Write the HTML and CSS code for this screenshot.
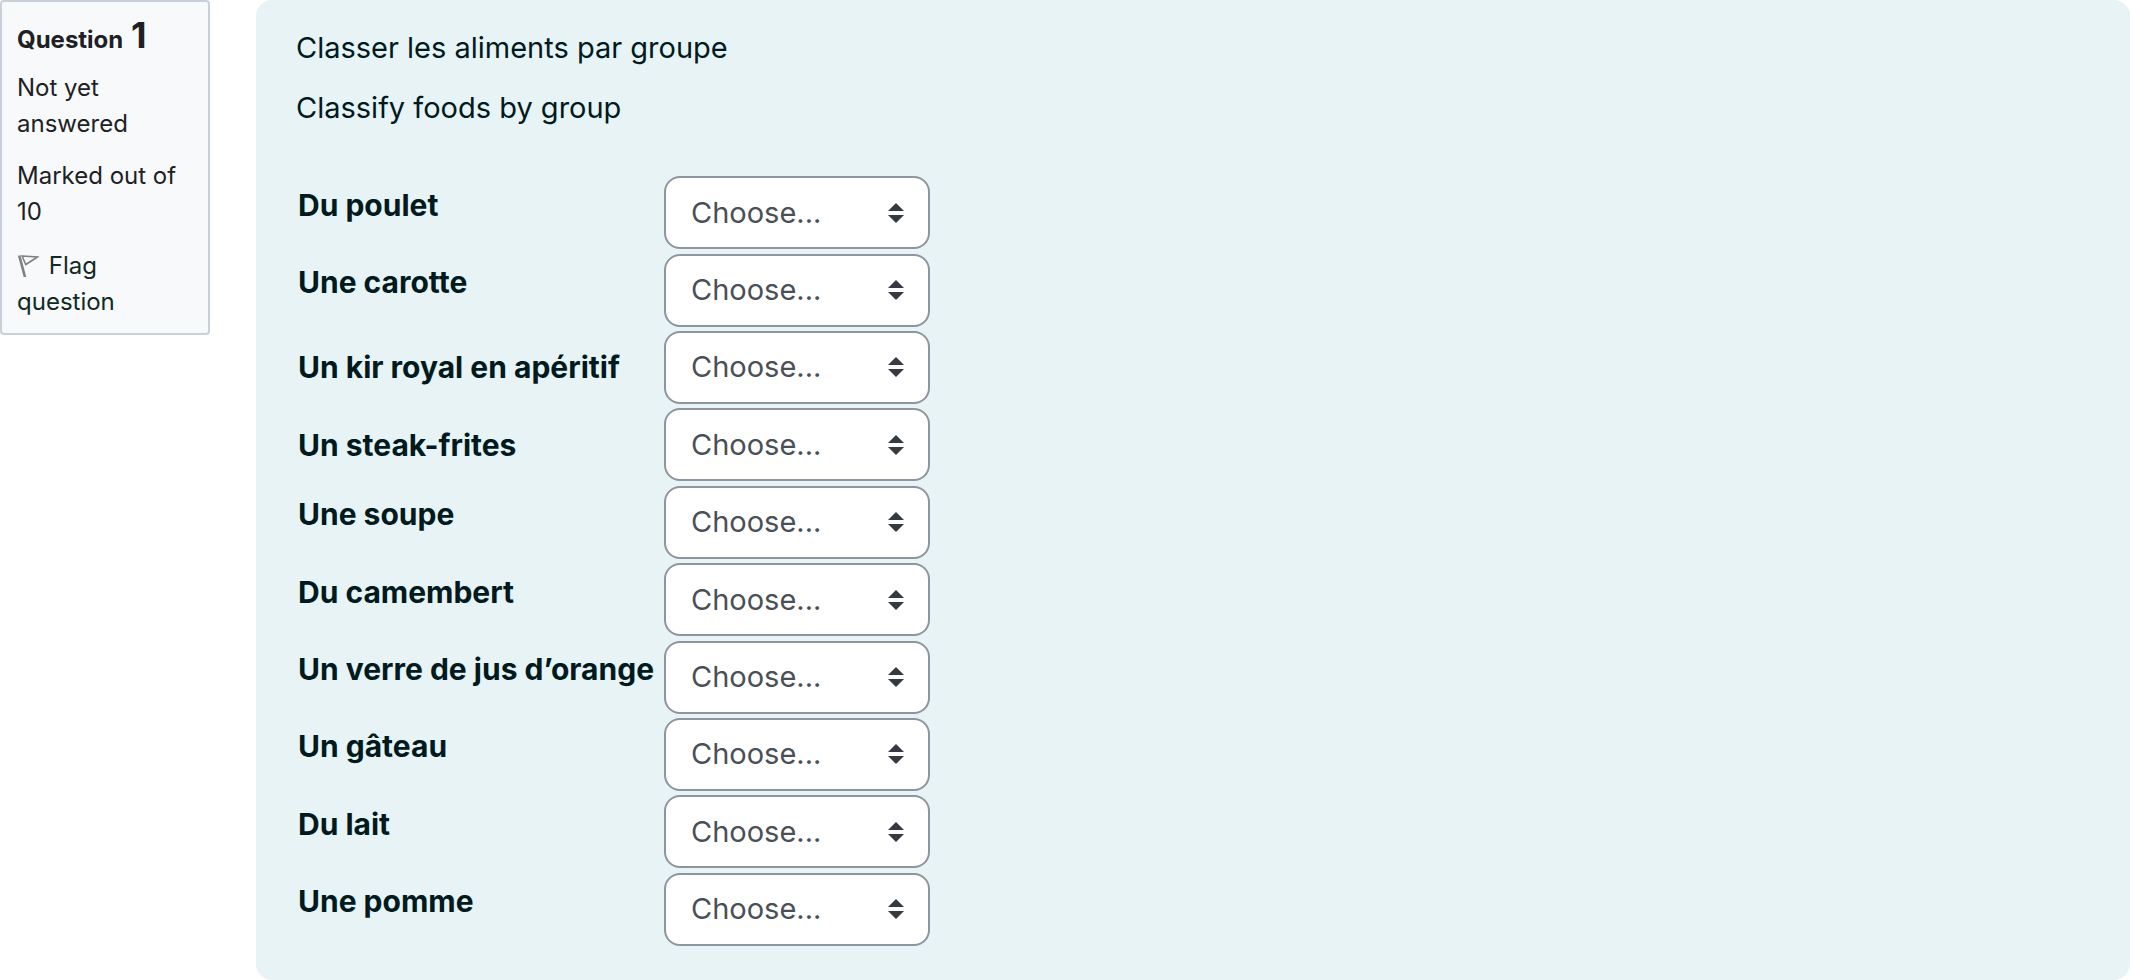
FILE: index.html
```html
<!DOCTYPE html>
<html lang="en">
<head>
    <meta charset="UTF-8">
    <meta name="viewport" content="width=device-width, initial-scale=1.0">
    <title>Question 1</title>
    <link rel="stylesheet" href="styles.css">
</head>
<body>

    <div class="question">
        <aside class="info">
            <h3 class="no">Question <span class="qno">1</span></h3>
            <div class="state">Not yet answered</div>
            <div class="grade">Marked out of 10</div>
            <a class="flag" href="#">
                <svg class="flag-icon" viewBox="0 0 22 24" aria-hidden="true">
                    <path d="M2.2 1.5L8 23" stroke-width="2.6"/>
                    <path d="M5 2L20.5 3L8.8 10.5Z" stroke-width="1.6"/>
                </svg>
                Flag question
            </a>
        </aside>

        <main class="content">
            <div class="qtext">
                <p>Classer les aliments par groupe</p>
                <p>Classify foods by group</p>
            </div>

            <table class="answer">
                <tbody>
                    <tr>
                        <td class="text"><p><label for="sub1">Du poulet</label></p></td>
                        <td class="control"><select id="sub1"><option>Choose...</option></select></td>
                    </tr>
                    <tr>
                        <td class="text"><p><label for="sub2">Une carotte</label></p></td>
                        <td class="control"><select id="sub2"><option>Choose...</option></select></td>
                    </tr>
                    <tr>
                        <td class="text"><label for="sub3">Un kir royal en apéritif</label></td>
                        <td class="control"><select id="sub3"><option>Choose...</option></select></td>
                    </tr>
                    <tr>
                        <td class="text"><label for="sub4">Un steak-frites</label></td>
                        <td class="control"><select id="sub4"><option>Choose...</option></select></td>
                    </tr>
                    <tr>
                        <td class="text"><p><label for="sub5">Une soupe</label></p></td>
                        <td class="control"><select id="sub5"><option>Choose...</option></select></td>
                    </tr>
                    <tr>
                        <td class="text"><p><label for="sub6">Du camembert</label></p></td>
                        <td class="control"><select id="sub6"><option>Choose...</option></select></td>
                    </tr>
                    <tr>
                        <td class="text"><p><label for="sub7">Un verre de jus d’orange</label></p></td>
                        <td class="control"><select id="sub7"><option>Choose...</option></select></td>
                    </tr>
                    <tr>
                        <td class="text"><p><label for="sub8">Un gâteau</label></p></td>
                        <td class="control"><select id="sub8"><option>Choose...</option></select></td>
                    </tr>
                    <tr>
                        <td class="text"><p><label for="sub9">Du lait</label></p></td>
                        <td class="control"><select id="sub9"><option>Choose...</option></select></td>
                    </tr>
                    <tr>
                        <td class="text"><p><label for="sub10">Une pomme</label></p></td>
                        <td class="control"><select id="sub10"><option>Choose...</option></select></td>
                    </tr>
                </tbody>
            </table>
        </main>
    </div>

</body>
</html>
```
FILE: styles.css
```css
:root {
    --text: #1d2125;
    --question-text: #001a1e;
    --question-bg: #e7f3f5;
    --info-bg: #f8f9fa;
    --info-border: #cad0d7;
    --select-border: #8f959e;
    --select-text: #495057;
}
* { box-sizing: border-box; }
body { margin: 0; background: #fff; color: var(--text); font-family: Inter, "Liberation Sans", sans-serif; font-size: 29px; line-height: 44px; }
p { margin: 0 0 16px; }

.question { display: flex; align-items: flex-start; gap: 46px; }

/* Info box */
.info { flex: 0 0 210px; padding: 13px 15px; border: 2px solid var(--info-border); border-radius: 4px; background: var(--info-bg); font-size: 24px; line-height: 36px; }
.no { margin: 0 0 10px; font-size: 24px; font-weight: 700; line-height: 40px; }
.qno { margin-left: 2px; font-size: 36px; }
.state { margin-bottom: 16px; }
.grade { margin-bottom: 18px; }
.flag { display: block; color: #0f2a24; text-decoration: none; }
.flag-icon { width: 22px; height: 24px; margin-right: 3px; vertical-align: -4px; fill: none; stroke: #808080; }

/* Question area */
.content { flex: 1; min-width: 0; padding: 26px 40px 32px; border-radius: 16px; background: var(--question-bg); color: var(--question-text); }
.qtext { margin-bottom: 44px; }

.answer { height: 774px; border-collapse: collapse; }
.answer td { padding: 2px 0; vertical-align: middle; }
.answer .text { width: 368px; padding-left: 2px; font-size: 30px; font-weight: 700; white-space: nowrap; }
.control select { display: block; width: 266px; height: 73px; padding: 0 52px 0 25px; border: 2px solid var(--select-border); border-radius: 16px; appearance: none; color: var(--select-text); font: inherit; background: #fff url("data:image/svg+xml,%3Csvg xmlns='http://www.w3.org/2000/svg' viewBox='0 0 4 5'%3E%3Cpath fill='%23343a40' d='M2 0L0 2h4zm0 5L0 3h4z'/%3E%3C/svg%3E") no-repeat right 24px center / 16px 20px; }
```
